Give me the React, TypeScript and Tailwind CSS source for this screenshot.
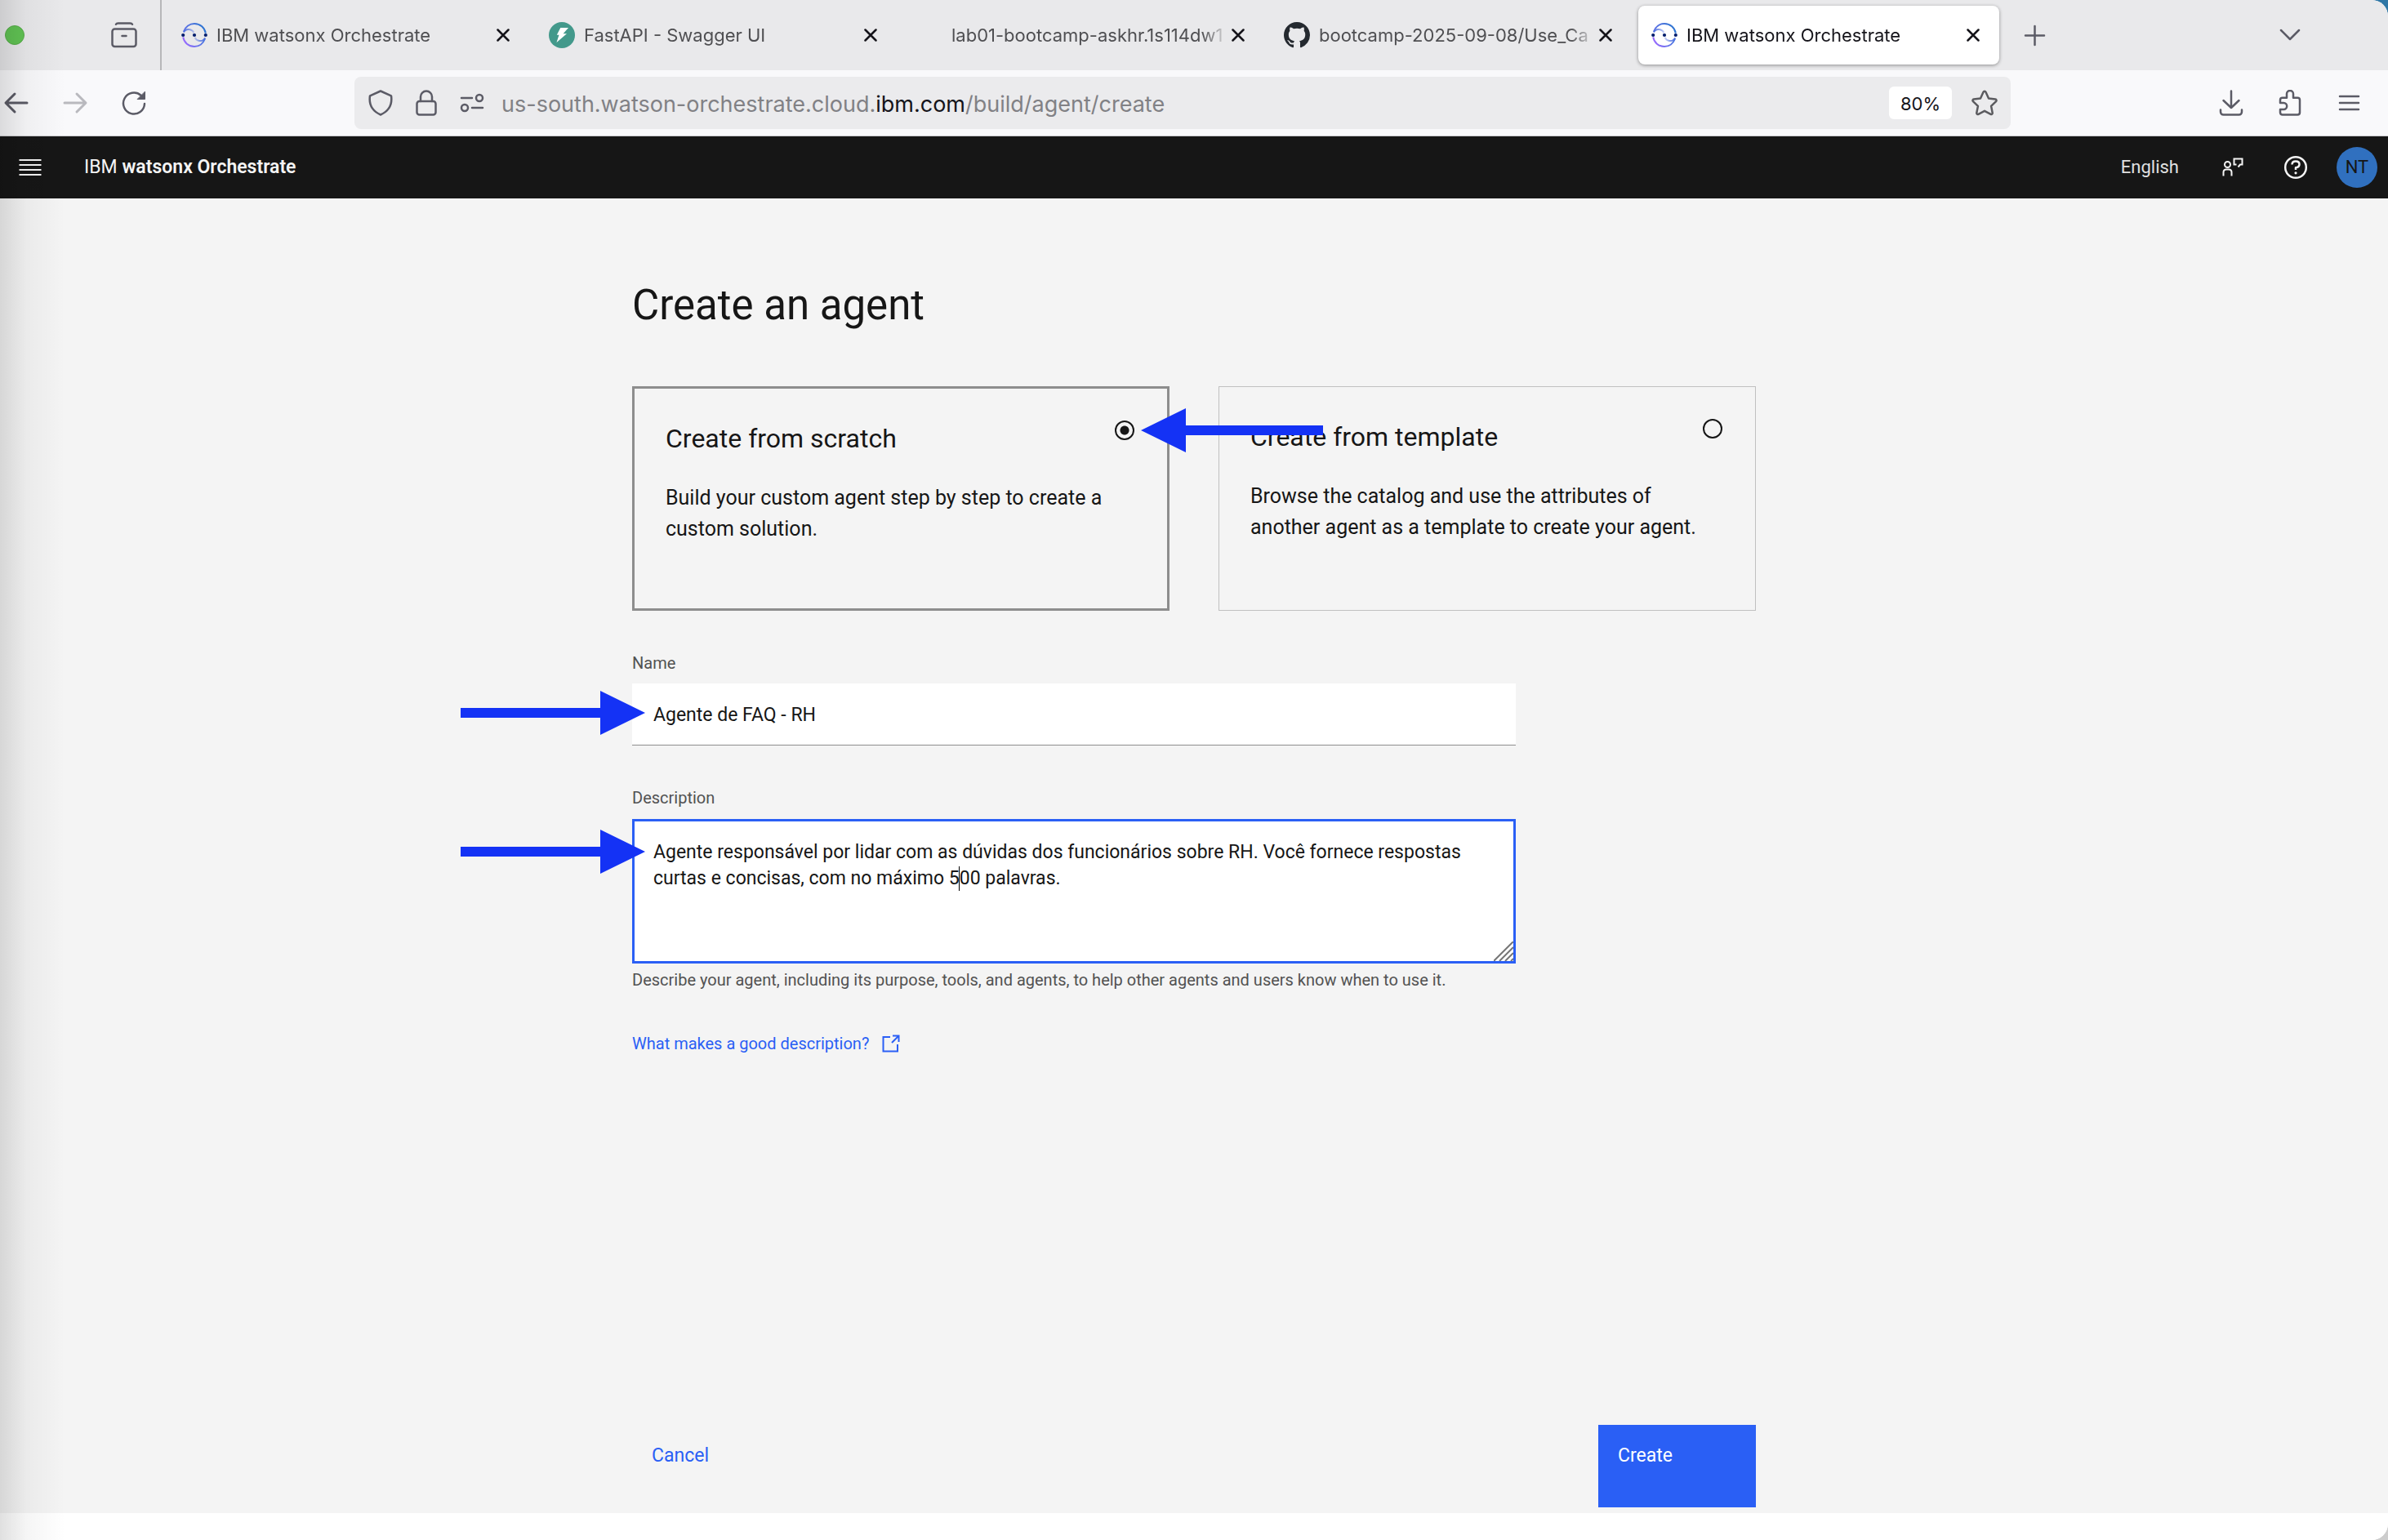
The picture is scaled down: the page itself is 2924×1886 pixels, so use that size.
import type { ReactNode } from "react";

const INK = "#5b5b66";

type IconProps = { className?: string };

function Icon({ className = "", children, width = 2.5 }: IconProps & { children: ReactNode; width?: number }) {
  return (
    <svg
      viewBox="0 0 32 32"
      className={`size-8 shrink-0 ${className}`}
      fill="none"
      stroke="currentColor"
      strokeWidth={width}
      strokeLinecap="round"
      strokeLinejoin="round"
      aria-hidden="true"
    >
      {children}
    </svg>
  );
}

function OrchestrateLogo({ id }: { id: string }) {
  return (
    <svg viewBox="0 0 32 32" className="size-8 shrink-0" fill="none" aria-hidden="true">
      <defs>
        <linearGradient id={`${id}-top`} x1="2" y1="16" x2="29" y2="6" gradientUnits="userSpaceOnUse">
          <stop offset="0" stopColor="#6a72ea" />
          <stop offset="1" stopColor="#2a74d0" />
        </linearGradient>
        <linearGradient id={`${id}-bottom`} x1="3" y1="26" x2="29" y2="17" gradientUnits="userSpaceOnUse">
          <stop offset="0" stopColor="#9b6bff" />
          <stop offset="1" stopColor="#3f77dc" />
        </linearGradient>
        <linearGradient id={`${id}-in`} x1="3" y1="10" x2="15" y2="12" gradientUnits="userSpaceOnUse">
          <stop offset="0" stopColor="#4d6fe0" />
          <stop offset="1" stopColor="#4d6fe0" stopOpacity=".35" />
        </linearGradient>
        <linearGradient id={`${id}-out`} x1="29" y1="22" x2="17" y2="20" gradientUnits="userSpaceOnUse">
          <stop offset="0" stopColor="#4d6fe0" />
          <stop offset="1" stopColor="#4d6fe0" stopOpacity=".35" />
        </linearGradient>
      </defs>
      <path d="M3 11.5C5.2 5.8 10.2 2 16 2c7 0 12.8 5 13.8 11.6" stroke={`url(#${id}-top)`} strokeWidth="2" />
      <path d="M29 20.5C26.8 26.2 21.8 30 16 30 9 30 3.2 25 2.200 18.4" stroke={`url(#${id}-bottom)`} strokeWidth="2" />
      <path d="M2.8 12.5C4.5 9.5 8 8.5 10.8 9.2c2.6.7 4 2.2 4.6 4" stroke={`url(#${id}-in)`} strokeWidth="2" />
      <path d="M29.2 19.5C27.5 22.5 24 23.5 21.2 22.8c-2.6-.7-4-2.2-4.6-4" stroke={`url(#${id}-out)`} strokeWidth="2" />
      <circle cx="2.200" cy="16" r="2.100" fill="#001d6c" />
      <circle cx="16" cy="16" r="2.100" fill="#001d6c" />
      <circle cx="29.8" cy="16" r="2.100" fill="#001d6c" />
    </svg>
  );
}

function FastApiLogo() {
  return (
    <svg viewBox="0 0 32 32" className="size-8 shrink-0" aria-hidden="true">
      <circle cx="16" cy="16" r="16" fill="#43998b" />
      <path d="M14.300 7H24l-6.400 7.300H22l-12.500 10.700 3-9.200H9.800z" fill="#fff" />
    </svg>
  );
}

function GithubLogo() {
  return (
    <svg viewBox="0 0 16 16" className="size-8 shrink-0" fill="#24292f" aria-hidden="true">
      <path d="M8 0C3.580 0 0 3.580 0 8c0 3.540 2.290 6.530 5.470 7.590.4.070.55-.17.55-.38 0-.19-.01-.82-.01-1.490-2.010.37-2.530-.49-2.690-.94-.09-.23-.48-.94-.82-1.130-.28-.15-.68-.52-.01-.53.63-.01 1.080.58 1.230.82.72 1.210 1.870.87 2.330.66.07-.52.28-.87.51-1.070-1.780-.2-3.640-.89-3.640-3.950 0-.87.31-1.590.82-2.150-.08-.2-.36-1.020.08-2.120 0 0 .67-.21 2.200.82.64-.18 1.320-.27 2-.27s1.360.09 2 .27c1.530-1.040 2.200-.82 2.200-.82.44 1.100.16 1.920.08 2.120.51.56.82 1.270.82 2.150 0 3.070-1.870 3.750-3.650 3.950.29.25.54.73.54 1.480 0 1.070-.01 1.930-.01 2.200 0 .21.15.46.55.38A8.010 8.010 0 0 0 16 8c0-4.420-3.580-8-8-8z" />
    </svg>
  );
}

type TabData = { title: string; icon: ReactNode; active?: boolean };

const tabs: TabData[] = [
  { title: "IBM watsonx Orchestrate", icon: <OrchestrateLogo id="tab-first" /> },
  { title: "FastAPI - Swagger UI", icon: <FastApiLogo /> },
  { title: "lab01-bootcamp-askhr.1s114dw1", icon: null },
  { title: "bootcamp-2025-09-08/Use_Ca", icon: <GithubLogo /> },
  { title: "IBM watsonx Orchestrate", icon: <OrchestrateLogo id="tab-last" />, active: true },
];

function BrowserTab({ title, icon, active }: TabData) {
  return (
    <div
      role="tab"
      aria-selected={!!active}
      className={`flex h-[72px] w-[442px] items-center pr-5 pl-4 ${
        active ? "rounded-lg bg-white text-[#15141a] shadow-[0_1px_4px_rgba(0,0,0,0.4)]" : "text-[#4f4f52]"
      }`}
    >
      <span className="mr-[11px] size-8 shrink-0">{icon}</span>
      <span className="min-w-0 flex-1 whitespace-nowrap [mask-image:linear-gradient(to_left,transparent,black_32px)]">
        {title}
      </span>
      <button type="button" aria-label={`Close ${title}`} className="flex size-6 shrink-0 items-center justify-center text-[#15141a]">
        <svg viewBox="0 0 16 16" className="size-4" stroke="currentColor" strokeWidth="2.5" strokeLinecap="round" aria-hidden="true">
          <path d="M1.500 1.500l13 13M14.500 1.500l-13 13" />
        </svg>
      </button>
    </div>
  );
}

function TabStrip() {
  return (
    <div className="flex h-[86px] items-center bg-[#e9e9eb] text-[22px] leading-8">
      <div className="flex w-[198px] shrink-0 items-center justify-between self-stretch border-r-2 border-[#b7b7b9] pr-7 pl-1.5">
        <span className="size-6 rounded-full border border-[#57ad49] bg-[#61c454]" />
        <button type="button" aria-label="Firefox View" className="text-[#5b5b66]">
          <Icon>
            <rect x="1.500" y="8.500" width="29" height="21.500" rx="3" />
            <path d="M6 2.800C6.500 1.800 7.500 1.500 8.500 1.500h15c1 0 2 .3 2.500 1.300" />
            <path d="M13.500 17h5" />
          </Icon>
        </button>
      </div>
      <div role="tablist" className="flex gap-2 pl-2">
        {tabs.map((tab, i) => (
          <BrowserTab key={i} {...tab} />
        ))}
      </div>
      <button type="button" aria-label="New tab" className="ml-7 text-[#5b5b66]">
        <Icon>
          <path d="M15.500 5v23M4 16.500h23" />
        </Icon>
      </button>
      <button type="button" aria-label="List all tabs" className="mr-[104px] ml-auto text-[#5b5b66]">
        <Icon>
          <path d="M5 10l11 11 11-11" />
        </Icon>
      </button>
    </div>
  );
}

function Toolbar() {
  return (
    <div className="flex h-[81px] items-center border-b border-[#cccccf] bg-[#f9f9fb] text-[#5b5b66]">
      <div className="flex w-[434px] shrink-0 items-center gap-10 pl-1">
        <button type="button" aria-label="Back">
          <Icon width={3}>
            <path d="M29 16H3.500M14 5L3 16l11 11" />
          </Icon>
        </button>
        <button type="button" aria-label="Forward" className="text-[#b9b9be]">
          <Icon width={3}>
            <path d="M3 16h25.500M18 5l11 11-11 11" />
          </Icon>
        </button>
        <button type="button" aria-label="Reload">
          <Icon>
            <path d="M29 17a13 13 0 1 1-4.500-10.300" />
            <path d="M29.500 2.500v9h-9z" fill={INK} strokeWidth="1" />
          </Icon>
        </button>
      </div>
      <div className="flex h-16 min-w-0 flex-1 items-center rounded-lg bg-[#ebebed] pr-4 pl-4">
        <Icon>
          <path d="M16 1.500l13 5.800C30.500 17.500 26 26 16 30.500 6 26 1.500 17.500 3 7.300z" />
        </Icon>
        <Icon className="ml-6">
          <rect x="4.500" y="14" width="23" height="16.500" rx="3" />
          <path d="M9 14V8.500a7 7 0 0 1 14 0V14" />
        </Icon>
        <Icon className="ml-6">
          <circle cx="25" cy="10" r="4" />
          <circle cx="7" cy="22" r="4" />
          <path d="M3 10h13M16 22h13" />
        </Icon>
        <div className="ml-5 min-w-0 flex-1 truncate pt-1 text-[27px] leading-9 text-[#818185]">
          us-south.watson-orchestrate.cloud.<span className="text-[#15141a]">ibm.com</span>/build/agent/create
        </div>
        <button type="button" className="mr-6 h-10 w-[77px] rounded-md bg-white pt-0.5 text-[22px] leading-8 text-[#15141a]">
          80%
        </button>
        <button type="button" aria-label="Bookmark this page" className="text-[#5b5b5f]">
          <Icon>
            <path d="M16 1.800c.7 0 1.200.4 1.500 1l3.500 7.700 8.200 1c1.300.2 1.800 1.700.9 2.600l-6 5.800 1.600 8.300c.2 1.300-1.100 2.200-2.200 1.600L16 25.800l-7.500 4c-1.100.6-2.400-.3-2.200-1.600l1.600-8.300-6-5.800c-.9-.9-.4-2.400.9-2.600l8.200-1 3.500-7.700c.3-.6.800-1 1.500-1z" />
          </Icon>
        </button>
      </div>
      <div className="flex w-[462px] shrink-0 items-center justify-end gap-10 pr-8">
        <button type="button" aria-label="Downloads">
          <Icon>
            <path d="M16 1.500v20.500M6.500 13L16 22l9.500-9M3 24.500v2.500c0 2 1.500 3.500 3.500 3.500h19c2 0 3.500-1.500 3.500-3.500v-2.500" />
          </Icon>
        </button>
        <button type="button" aria-label="Extensions">
          <Icon>
            <path d="M4 16V12.500c0-1.700 1-2.700 2.700-2.700h5.300V5a4 4 0 0 1 8 0v4.800h5.300c1.700 0 2.700 1 2.700 2.700v15.300c0 1.700-1 2.700-2.700 2.700H6.700C5 30.500 4 29.500 4 27.800V24h4.200a4 4 0 0 0 0-8z" />
          </Icon>
        </button>
        <button type="button" aria-label="Open application menu">
          <Icon>
            <path d="M5 8h23M5 16h23M5 24h23" />
          </Icon>
        </button>
      </div>
    </div>
  );
}

function AppHeader() {
  return (
    <header className="flex h-[76px] shrink-0 items-center bg-[#161616] pr-[13px] pl-[21px] text-[23px] leading-8 text-[#f4f4f4]">
      <button type="button" aria-label="Open menu">
        <Icon width={2}>
          <path d="M2.500 7h27M2.500 13h27M2.500 19h27M2.500 25h27" strokeLinecap="butt" />
        </Icon>
      </button>
      <a href="#home" className="ml-[50px] whitespace-nowrap">
        IBM <span className="font-semibold">watsonx Orchestrate</span>
      </a>
      <button type="button" className="ml-auto text-[22px] text-[#e0e0e0]">
        English
      </button>
      <button type="button" aria-label="Feedback" className="ml-[51px]">
        <Icon width={2}>
          <circle cx="8.500" cy="12.500" r="3.500" />
          <path
            d="M3.500 26.500v-4.500c0-2.200 1.300-3.500 3.500-3.500h3c2.200 0 3.500 1.300 3.500 3.500v4.500M19.500 12.500h-3V5.500h10v7h-2.500l-2.500 3"
            strokeLinecap="butt"
            strokeLinejoin="miter"
          />
        </Icon>
      </button>
      <button type="button" aria-label="Help" className="ml-11">
        <Icon>
          <circle cx="16" cy="16" r="12.800" />
          <path d="M11.500 12.500c0-2.500 1.800-4 4.500-4s4.500 1.500 4.500 3.800c0 2.500-2 3.700-4.500 3.900v2.800" strokeLinecap="butt" />
          <circle cx="16" cy="22.800" r="1.600" fill="currentColor" stroke="none" />
        </Icon>
      </button>
      <button type="button" aria-label="Account" className="ml-[34px] size-[50px] rounded-full bg-[#3070bf] text-[22px] text-[#161616]">
        NT
      </button>
    </header>
  );
}

/** Blue annotation arrow that points right; `flip` turns it to the left. */
function Arrow({ className, flip }: { className: string; flip?: boolean }) {
  return (
    <svg viewBox="0 0 226 54" className={`pointer-events-none absolute h-[54px] w-[226px] ${className}`} aria-hidden="true">
      <path
        d={flip ? "M2 27L57 0V21H225V33H57V54z" : "M226 27L171 0V21H0V33H171V54z"}
        fill="#1432f5"
      />
    </svg>
  );
}

function OptionCard({ title, text, checked }: { title: string; text: string; checked?: boolean }) {
  return (
    <label
      className={`flex min-h-[275px] items-start py-[39px] pr-10 pl-[38px] text-[#161616] ${
        checked ? "border-[3px] border-[#8d8d8d]" : "border border-[#c0c0c0]"
      }`}
    >
      <span className="flex-1">
        <span className="block text-[32px] leading-[44px]">{title}</span>
        <span className="mt-8 block text-[25px] leading-[38px]">{text}</span>
      </span>
      <input
        type="radio"
        name="mode"
        defaultChecked={checked}
        className="-ml-6 size-6 shrink-0 appearance-none rounded-full border-2 border-[#161616] checked:bg-[radial-gradient(circle,#161616_5px,transparent_6px)]"
      />
    </label>
  );
}

function CreateAgentForm() {
  return (
    <main className="flex flex-1 flex-col bg-[#f4f4f4] px-10">
      <form className="mx-auto flex w-full max-w-[1376px] flex-1 flex-col pt-[99px] pb-[7px]">
        <h1 className="text-[51px] leading-[64px] text-[#161616]">Create an agent</h1>

        <div className="relative mt-[67px] grid grid-cols-2 gap-[60px]">
          <OptionCard
            checked
            title="Create from scratch"
            text="Build your custom agent step by step to create a custom solution."
          />
          <OptionCard
            title="Create from template"
            text="Browse the catalog and use the attributes of another agent as a template to create your agent."
          />
          <Arrow flip className="top-[27px] left-[621px]" />
        </div>

        <div className="mt-12 flex w-full max-w-[1082px] flex-col">
          <label htmlFor="agent-name" className="text-[20px] leading-8 text-[#525252]">
            Name
          </label>
          <div className="relative mt-[9px]">
            <input
              id="agent-name"
              type="text"
              defaultValue="Agente de FAQ - RH"
              className="block h-[76px] w-full border-b border-[#8d8d8d] bg-white px-[26px] pt-0.5 text-[23px] leading-8 text-[#161616] outline-none"
            />
            <Arrow className="top-[9px] right-full -mr-4" />
          </div>

          <label htmlFor="agent-description" className="mt-12 text-[20px] leading-8 text-[#525252]">
            Description
          </label>
          <div className="relative mt-[10px]">
            <textarea
              id="agent-description"
              defaultValue="Agente responsável por lidar com as dúvidas dos funcionários sobre RH. Você fornece respostas curtas e concisas, com no máximo 500 palavras."
              className="block h-[177px] w-full resize-none border-[3px] border-[#2a5ff5] bg-white pt-[22px] pr-12 pl-[23px] text-[23px] leading-8 text-[#161616] outline-none"
            />
            <span className="absolute top-[58px] left-[400px] h-[30px] w-px bg-black" />
            <svg viewBox="0 0 24 24" className="absolute right-[3px] bottom-[3px] size-6" stroke="#767676" strokeWidth="2" aria-hidden="true">
              <path d="M0 24L24 0M7 24L24 7M14 24L24 14M21 24l3-3" />
            </svg>
            <Arrow className="top-[13px] right-full -mr-4" />
          </div>
          <p className="mt-[7px] text-[20px] leading-[26px] text-[#525252]">
            Describe your agent, including its purpose, tools, and agents, to help other agents and users know when to use it.
          </p>
          <a href="#good-description" className="mt-[52px] flex items-center self-start text-[20px] leading-[26px] text-[#2a5ff5]">
            What makes a good description?
            <svg viewBox="0 0 22 22" className="ml-4 size-[22px]" fill="none" stroke="currentColor" strokeWidth="2" aria-hidden="true">
              <path d="M10 3H1.500v17.500H19V12M13 1.500h7.500V9M20.500 1.500L12 10" />
            </svg>
          </a>
        </div>

        <div className="mt-auto flex items-start justify-between">
          <button type="button" className="mt-[22px] ml-6 text-[23px] leading-8 text-[#2a5ff5]">
            Cancel
          </button>
          <button type="submit" className="h-[101px] w-[193px] bg-[#2a5ff5] px-6 pb-[25px] text-left text-[23px] leading-8 text-white">
            Create
          </button>
        </div>
      </form>
    </main>
  );
}

export default function App() {
  return (
    <div className="bg-[linear-gradient(to_bottom,#2f77a6_50%,#cdcdcd_50%)]">
      <div className="relative flex min-h-screen flex-col overflow-hidden rounded-r-[20px] bg-white font-['Inter',sans-serif]">
        <TabStrip />
        <Toolbar />
        <div className="flex flex-1 flex-col font-['Roboto',sans-serif]">
          <AppHeader />
          <CreateAgentForm />
        </div>
        <div className="h-[33px] shrink-0 bg-white" />
        <div className="pointer-events-none absolute inset-y-0 left-0 w-20 bg-[linear-gradient(to_right,rgba(0,0,0,0.12),rgba(0,0,0,0.04)_40%,transparent)]" />
      </div>
    </div>
  );
}
